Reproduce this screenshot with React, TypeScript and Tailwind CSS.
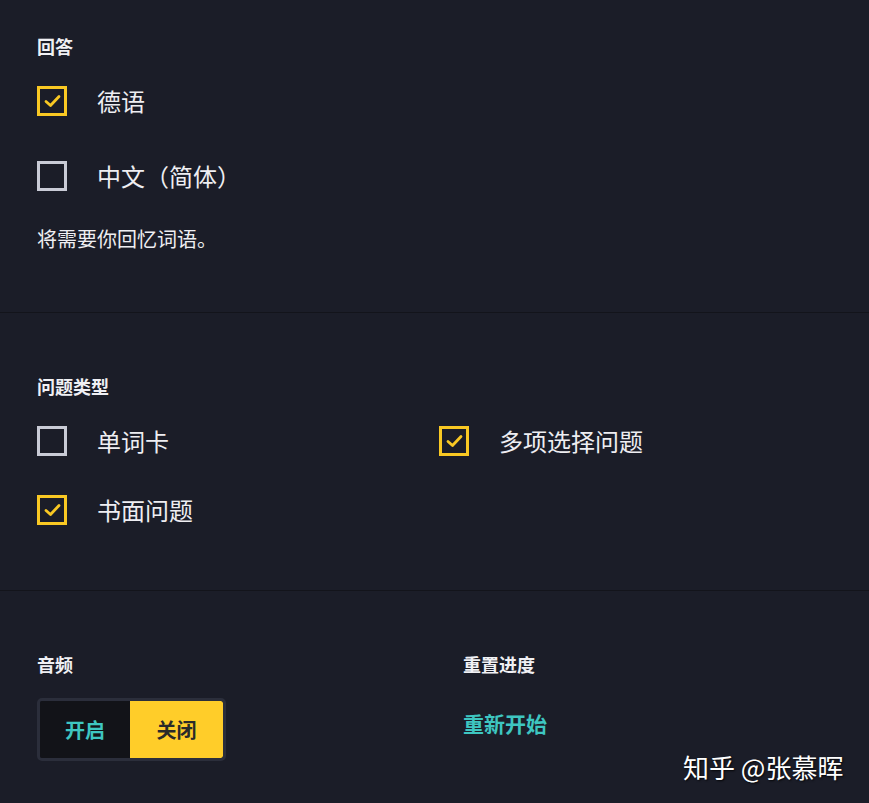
import React, { useState } from 'react';

const font = { fontFamily: '"Noto Sans CJK SC", "Noto Sans", sans-serif' };

const CheckBox = ({ checked, label, onToggle }) => (
  <button onClick={onToggle} className="flex items-center h-[30px] text-left">
    <span
      className={`w-[30px] h-[30px] border-[3px] flex items-center justify-center shrink-0 ${
        checked ? 'border-[#f9c823]' : 'border-[#c9cbd6]'
      }`}
    >
      {checked && (
        <svg width="17" height="14" viewBox="0 0 17 14" fill="none">
          <path d="M2 7.5 L6.5 11.5 L15 2.5" stroke="#f9c823" strokeWidth="2.8" strokeLinecap="round" strokeLinejoin="round" />
        </svg>
      )}
    </span>
    <span className="ml-[30px] text-[24px] leading-[30px] text-[#eeeef2]">{label}</span>
  </button>
);

const App = () => {
  const [answer, setAnswer] = useState({ de: true, zh: false });
  const [types, setTypes] = useState({ card: false, multi: true, written: true });
  const [audio, setAudio] = useState(false);

  return (
    <div className="relative min-h-screen w-full bg-[#1b1d28] text-[#f0f0f4]" style={font}>
      <section className="px-[37px] pt-[34px] pb-[59px] border-b border-[#13141b]">
        <h3 className="text-[18px] leading-[24px] font-bold">回答</h3>
        <div className="mt-[28px] flex flex-col gap-[45px]">
          <CheckBox checked={answer.de} label="德语" onToggle={() => setAnswer({ ...answer, de: !answer.de })} />
          <CheckBox checked={answer.zh} label="中文（简体）" onToggle={() => setAnswer({ ...answer, zh: !answer.zh })} />
        </div>
        <p className="mt-[34px] text-[20px] leading-[28px] text-[#eeeef2]">将需要你回忆词语。</p>
      </section>

      <section className="px-[37px] pt-[61px] pb-[65px] border-b border-[#13141b]">
        <h3 className="text-[18px] leading-[24px] font-bold">问题类型</h3>
        <div className="mt-[28px] grid grid-cols-[402px_1fr] gap-y-[39px]">
          <CheckBox checked={types.card} label="单词卡" onToggle={() => setTypes({ ...types, card: !types.card })} />
          <CheckBox checked={types.multi} label="多项选择问题" onToggle={() => setTypes({ ...types, multi: !types.multi })} />
          <CheckBox checked={types.written} label="书面问题" onToggle={() => setTypes({ ...types, written: !types.written })} />
        </div>
      </section>

      <section className="px-[37px] pt-[61px] pb-[40px] grid grid-cols-[426px_1fr]">
        <div>
          <h3 className="text-[18px] leading-[24px] font-bold">音频</h3>
          <div className="mt-[22px] inline-flex border-[3px] border-[#2b2e3b] rounded-[5px] overflow-hidden h-[63px]">
            <button
              onClick={() => setAudio(true)}
              className={`w-[90px] text-[20px] font-bold ${audio ? 'bg-[#ffcd29] text-[#2a2a2a]' : 'bg-[#121318] text-[#3ec6c1]'}`}
            >
              开启
            </button>
            <button
              onClick={() => setAudio(false)}
              className={`w-[93px] text-[20px] font-bold rounded-r-[2px] ${!audio ? 'bg-[#ffcd29] text-[#2a2a2a]' : 'bg-[#121318] text-[#3ec6c1]'}`}
            >
              关闭
            </button>
          </div>
        </div>
        <div>
          <h3 className="text-[18px] leading-[24px] font-bold">重置进度</h3>
          <button className="mt-[33px] text-[21px] leading-[28px] font-bold text-[#3ec6c1]">重新开始</button>
        </div>
      </section>

      <div
        className="absolute left-[683px] top-[750px] text-[26px] leading-[34px] text-white"
        style={{ textShadow: '1px 1px 2px rgba(0,0,0,0.8)' }}
      >
        知乎 @张慕晖
      </div>
    </div>
  );
};

export default App;
